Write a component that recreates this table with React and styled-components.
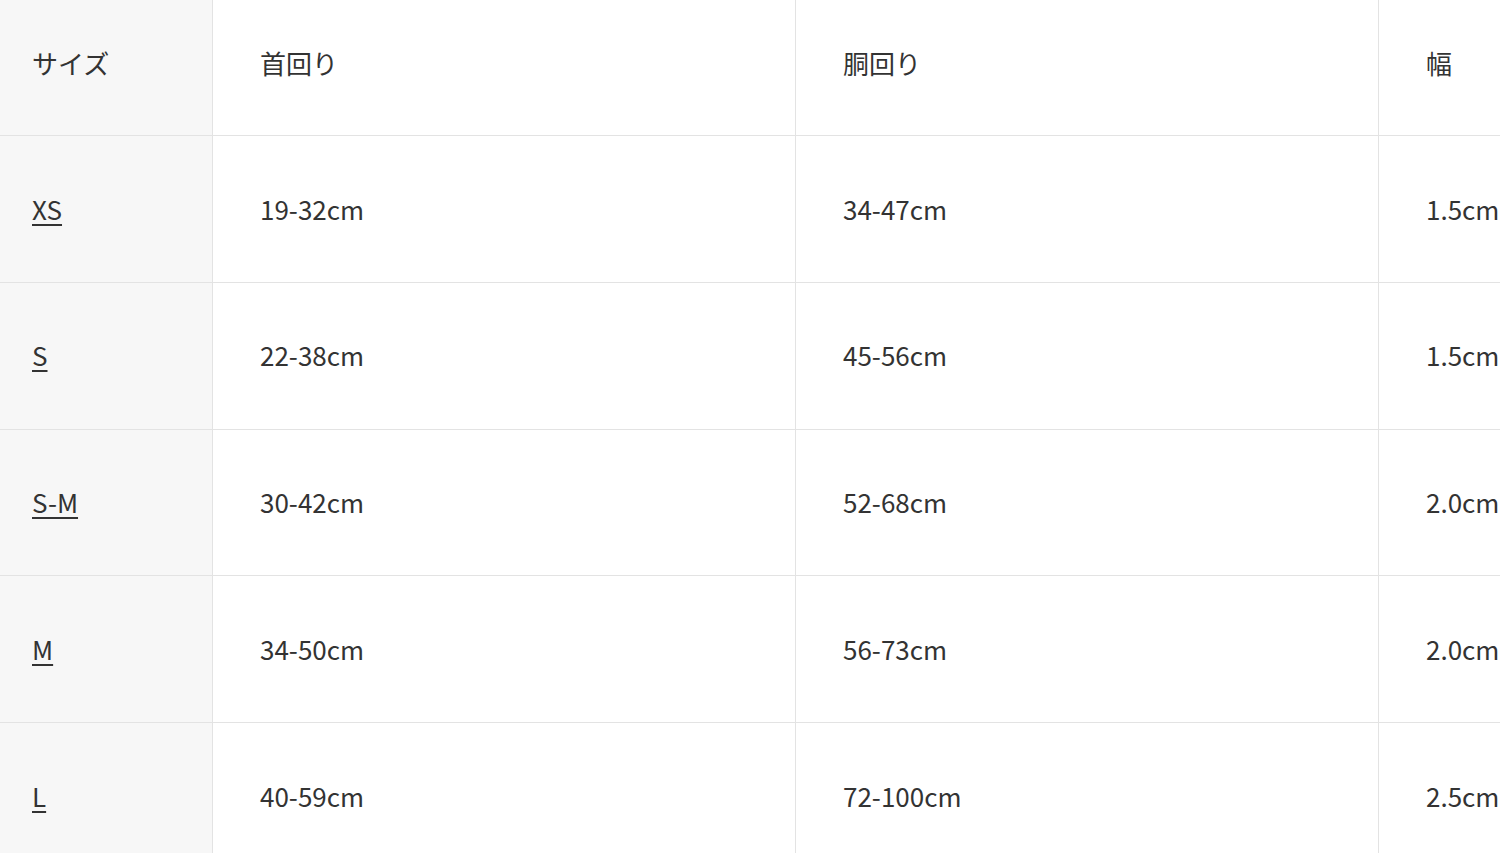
import React from "react";
import styled, { createGlobalStyle } from "styled-components";

const Global = createGlobalStyle`
  html, body { margin: 0; padding: 0; background: #fff; overflow: hidden; }
  body { font-family: "Noto Sans CJK JP", "Noto Sans", sans-serif; }
`;

const Viewport = styled.div`
  width: 1500px;
  height: 853px;
  overflow: hidden;
`;

const Table = styled.div`
  display: grid;
  grid-template-columns: 213px 583px 583px 583px;
  grid-template-rows: 136px repeat(5, 146.75px);
  width: max-content;
`;

const Cell = styled.div`
  box-sizing: border-box;
  display: flex;
  align-items: center;
  padding: 0 0 ${(p) => (p.$head ? "8px" : "0")} ${(p) => (p.$first ? "32px" : "47px")};
  background: ${(p) => (p.$first ? "#f7f7f7" : "#fff")};
  border-right: 1px solid #e3e3e3;
  border-bottom: 1px solid #e3e3e3;
  font-size: 26px;
  line-height: 1.4;
  color: #333;
  white-space: nowrap;
`;

const SizeLink = styled.a`
  color: #333;
  text-decoration: underline;
  text-decoration-thickness: 2px;
  text-underline-offset: 4px;
`;

const header = ["サイズ", "首回り", "胴回り", "幅"];
const rows = [
  ["XS", "19-32cm", "34-47cm", "1.5cm"],
  ["S", "22-38cm", "45-56cm", "1.5cm"],
  ["S-M", "30-42cm", "52-68cm", "2.0cm"],
  ["M", "34-50cm", "56-73cm", "2.0cm"],
  ["L", "40-59cm", "72-100cm", "2.5cm"],
];

export default function App() {
  return (
    <>
      <Global />
      <Viewport>
        <Table>
          {header.map((h, i) => (
            <Cell key={h} $head $first={i === 0}>
              {h}
            </Cell>
          ))}
          {rows.map((r) =>
            r.map((c, i) => (
              <Cell key={r[0] + i} $first={i === 0}>
                {i === 0 ? <SizeLink href="#">{c}</SizeLink> : c}
              </Cell>
            ))
          )}
        </Table>
      </Viewport>
    </>
  );
}
